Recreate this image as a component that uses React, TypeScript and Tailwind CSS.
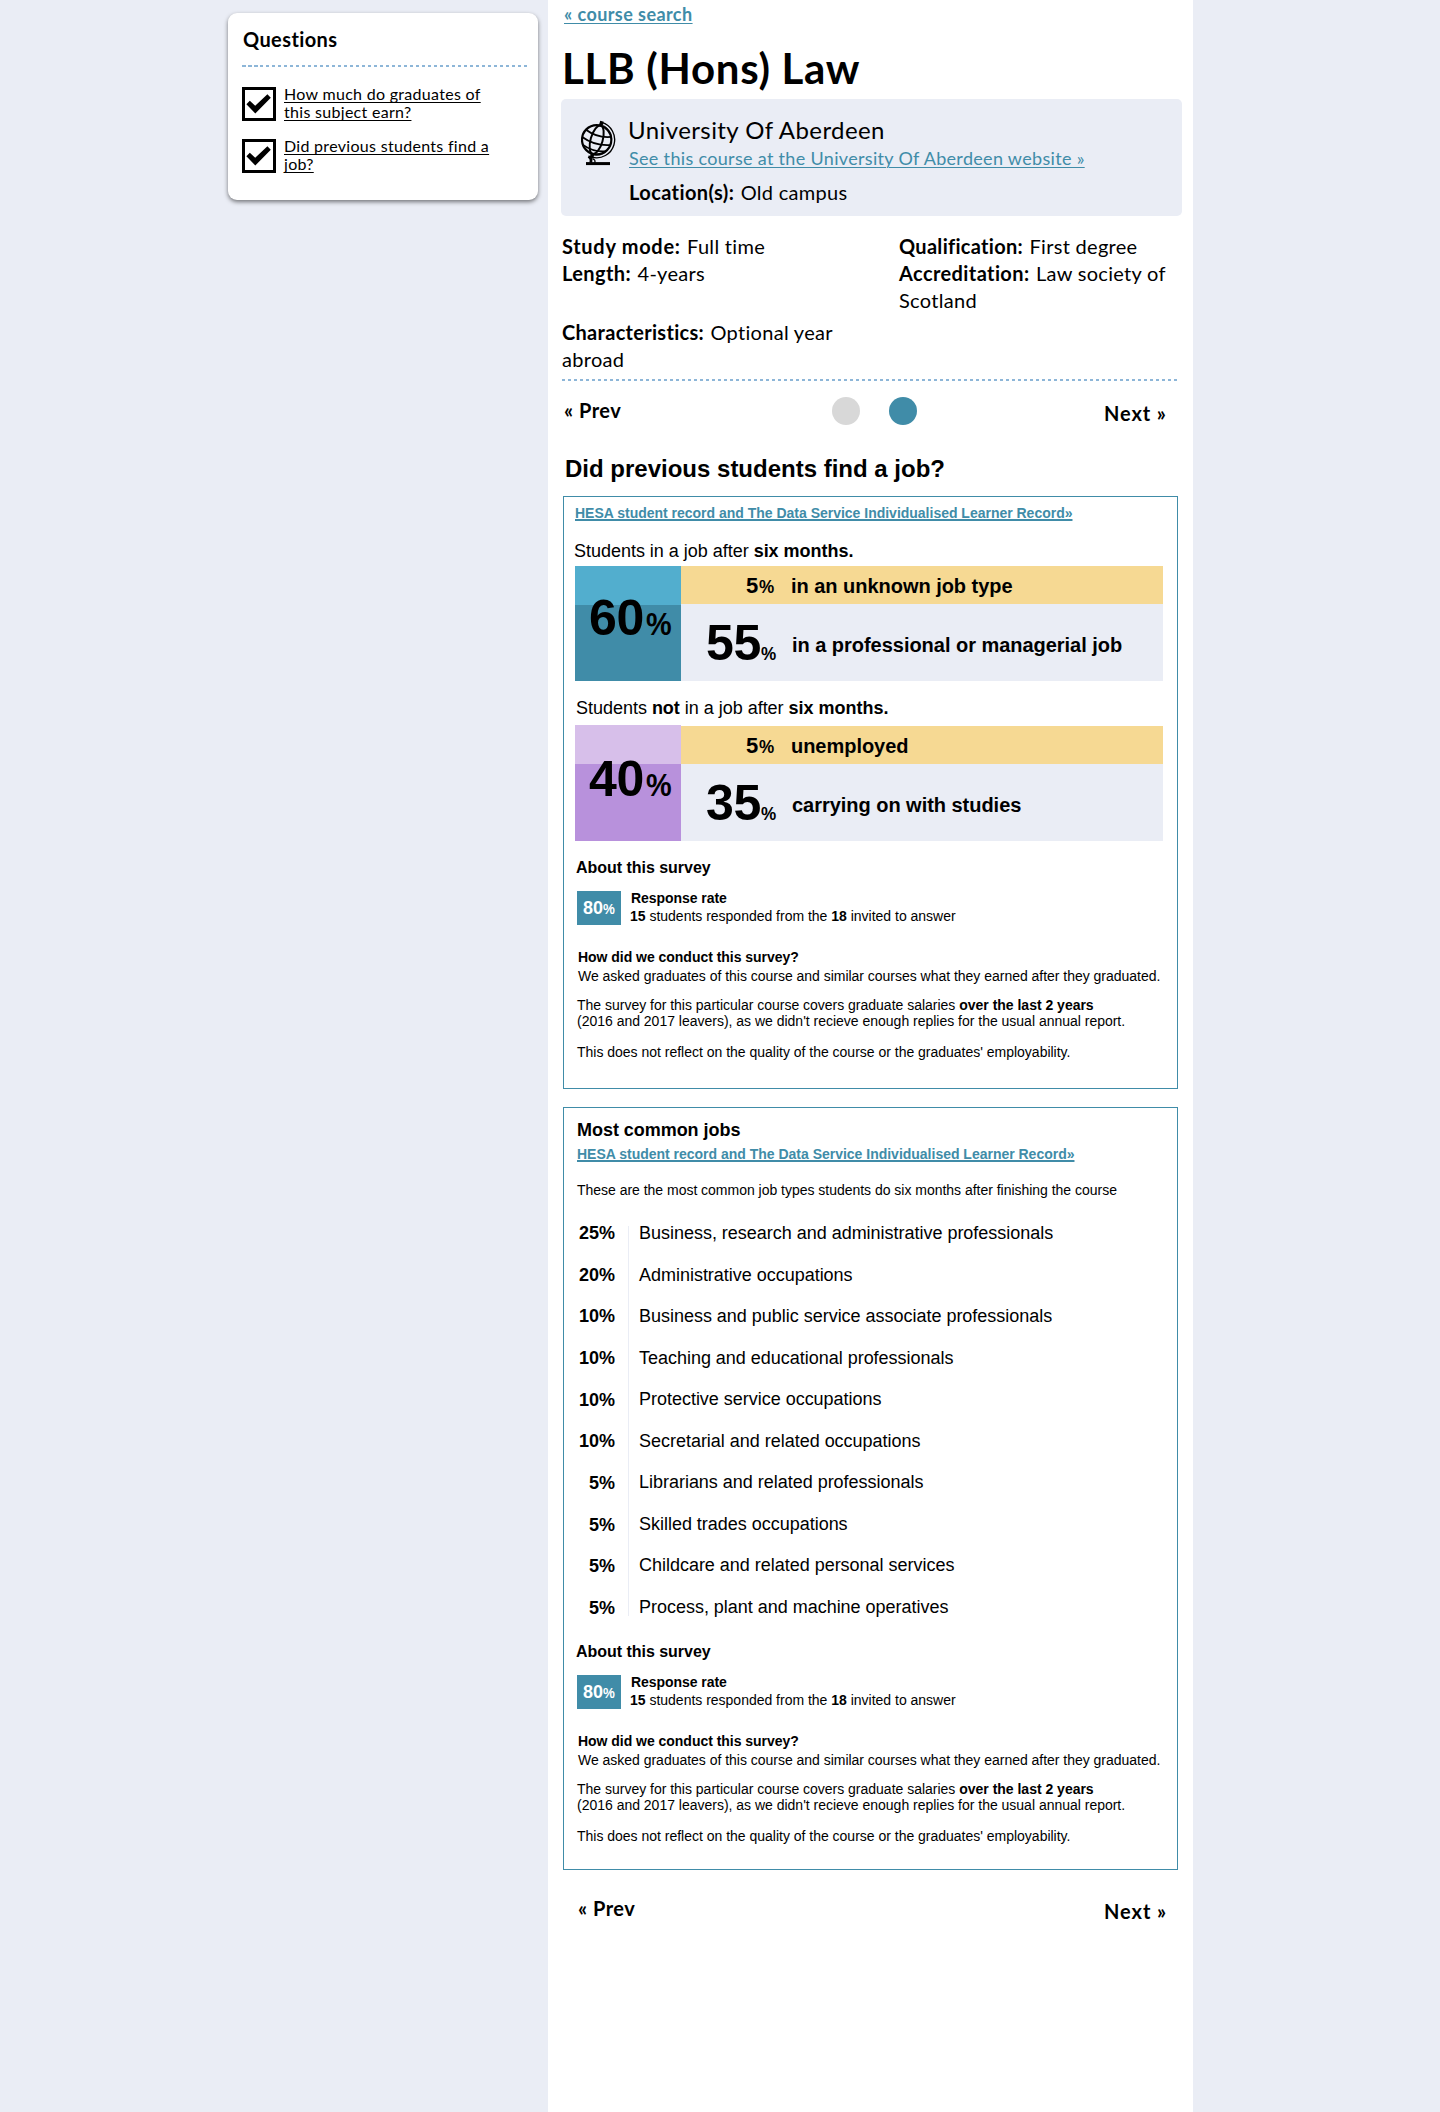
import React from "react";

const LINK = "text-[#408ca8] underline";

function DashedRule({ className }: { className: string }) {
  return (
    <div
      className={`h-[2px] bg-[repeating-linear-gradient(90deg,#8db6d8_0px,#8db6d8_3.5px,transparent_3.5px,transparent_6px)] ${className}`}
    />
  );
}

function Checkbox() {
  return (
    <svg viewBox="0 0 34 34" className="mt-[2px] size-[34px] shrink-0">
      <rect x="1.5" y="1.5" width="31" height="31" fill="#fff" stroke="#000" strokeWidth="3" />
      <path d="M4.4 17.3 7.8 13.7 13.2 18.8 25.4 7.3 28.8 10.8 13.3 26.4Z" fill="#000" />
    </svg>
  );
}

function GlobeIcon() {
  return (
    <svg viewBox="0 0 105 139" className="h-[46.5px] w-[35px]" fill="none" stroke="#000">
      <circle cx="47" cy="62" r="44" strokeWidth="6.5" />
      <g transform="rotate(16 47 62)">
        <ellipse cx="47" cy="62" rx="18" ry="44" strokeWidth="6" />
        <path d="M47 4V17" strokeWidth="11" />
        <path d="M8 42Q47 57 86 42M3 66Q47 82 91 66M12 88Q47 101 82 88" strokeWidth="5.5" />
        <path d="M47 8A54 54 0 0 1 47 116" strokeWidth="4" />
        <path d="M53 14A49 49 0 0 1 53 110" strokeWidth="1.5" />
        <path d="M47 106V119" strokeWidth="11" />
      </g>
      <path d="M22 112Q33 117 29 131" strokeWidth="8" />
      <path d="M34 119Q45 122 41 131" strokeWidth="4" />
      <path d="M15 133.5H87" strokeWidth="9" />
    </svg>
  );
}

function Questions() {
  const items = ["How much do graduates of this subject earn?", "Did previous students find a job?"];
  return (
    <aside className="mt-[13px] ml-[228px] h-[187px] w-[310px] shrink-0 rounded-[9px] bg-white pt-[13px] pl-[14px] shadow-[0_2px_4px_rgba(0,0,0,0.5)]">
      <h3 className="pl-px text-[20px] leading-[27px] font-bold tracking-[0.4px]">Questions</h3>
      <DashedRule className="mt-3 w-[286px]" />
      <div className="mt-[18px] flex flex-col gap-4">
        {items.map((q) => (
          <div key={q} className="flex gap-2">
            <Checkbox />
            <a className="w-[210px] text-[16px] leading-[18px] tracking-[0.3px] underline decoration-1 underline-offset-2 [text-decoration-skip-ink:none]">
              {q}
            </a>
          </div>
        ))}
      </div>
    </aside>
  );
}

function Detail(props: { label: string; value: string; labelClass?: string; className?: string }) {
  return (
    <p className={`text-[20px] leading-[27px] tracking-[0.3px] ${props.className ?? ""}`}>
      <b className={`mr-px ${props.labelClass ?? "tracking-[0.4px]"}`}>{props.label}</b> {props.value}
    </p>
  );
}

function HesaLink({ className }: { className: string }) {
  return (
    <a
      className={`block text-[14px] leading-5 font-bold tracking-[-0.01px] decoration-2 underline-offset-1 [text-decoration-skip-ink:none] ${LINK} ${className}`}
    >
      HESA student record and The Data Service Individualised Learner Record»
    </a>
  );
}

function OutcomeRows(props: { small: string; smallLabel: string; large: string; largeLabel: string }) {
  return (
    <div className="w-[482px] font-bold">
      <div className="flex h-[38px] items-baseline bg-[#f6d993] pt-[7px] pl-[65px]">
        <span className="w-[45px] text-[22px] leading-[25px]">
          {props.small}
          <span className="ml-[1px] inline-block origin-left scale-x-95 text-[18px]">%</span>
        </span>
        <span className="text-[20px] leading-5 tracking-[-0.03px]">{props.smallLabel}</span>
      </div>
      <div className="flex h-[77px] items-start bg-[#eaedf5] pl-[25px]">
        <span className="mt-[14px] w-[86px] text-[50px] leading-[50px] tracking-[-0.3px]">
          {props.large}
          <span className="inline-block origin-left scale-x-90 text-[19px]">%</span>
        </span>
        <span className="mt-[31px] text-[20px] leading-5 tracking-[-0.03px]">{props.largeLabel}</span>
      </div>
    </div>
  );
}

function Survey({ className }: { className: string }) {
  return (
    <section className={`text-[14px] tracking-[-0.01px] ${className}`}>
      <h4 className="pl-3 text-[16px] leading-[21px] font-bold tracking-[-0.03px]">About this survey</h4>
      <div className="mt-[11px] flex pl-[13px]">
        <div className="mt-[2px] h-[34px] w-11 bg-[#408ca8] pl-[6px] text-[18px] leading-[34px] font-bold text-white">
          80<span className="inline-block origin-left scale-x-95 text-[14px]">%</span>
        </div>
        <div className="pl-[9px] leading-[18px]">
          <p className="pl-px font-bold tracking-[-0.05px]">Response rate</p>
          <p>
            <b>15</b> students responded from the <b>18</b> invited to answer
          </p>
        </div>
      </div>
      <h5 className="mt-[23px] pl-[14px] leading-[18px] font-bold tracking-[-0.03px]">How did we conduct this survey?</h5>
      <p className="mt-px pl-[14px] leading-[18px] tracking-[-0.02px] whitespace-nowrap">
        We asked graduates of this course and similar courses what they earned after they graduated.
      </p>
      <p className="mt-3 pl-[13px] leading-4">
        The survey for this particular course covers graduate salaries <b>over the last 2 years</b>
        <br />
        (2016 and 2017 leavers), as we didn't recieve enough replies for the usual annual report.
      </p>
      <p className="mt-[15px] pl-[13px] leading-4">
        This does not reflect on the quality of the course or the graduates' employability.
      </p>
    </section>
  );
}

const JOBS: [string, string][] = [
  ["25%", "Business, research and administrative professionals"],
  ["20%", "Administrative occupations"],
  ["10%", "Business and public service associate professionals"],
  ["10%", "Teaching and educational professionals"],
  ["10%", "Protective service occupations"],
  ["10%", "Secretarial and related occupations"],
  ["5%", "Librarians and related professionals"],
  ["5%", "Skilled trades occupations"],
  ["5%", "Childcare and related personal services"],
  ["5%", "Process, plant and machine operatives"],
];

export default function App() {
  return (
    <div className="flex h-[2112px] w-[1440px] items-start gap-[10px] bg-[#eaedf5] font-['Lato',sans-serif] text-black">
      <Questions />
      <main className="h-[2112px] w-[645px] bg-white pt-[3px]">
        <a className={`block w-fit pl-4 text-[18px] leading-[22px] font-bold tracking-[0.43px] decoration-1 underline-offset-2 ${LINK}`}>
          « course search
        </a>
        <h1 className="mt-[19px] pl-[14px] text-[42px] leading-[49px] font-bold tracking-[0.7px]">LLB (Hons) Law</h1>

        <section className="mt-[6px] ml-[13px] flex h-[117px] w-[621px] rounded-[5px] bg-[#eaedf5] pl-5">
          <div className="w-[48px] pt-[20px]">
            <GlobeIcon />
          </div>
          <div className="pt-4">
            <h2 className="-ml-px text-[24px] leading-[29px] tracking-[0.42px]">University Of Aberdeen</h2>
            <a className={`mt-[3px] block text-[18px] leading-[22px] tracking-[0.32px] decoration-1 underline-offset-2 ${LINK}`}>
              See this course at the University Of Aberdeen website »
            </a>
            <Detail label="Location(s):" value="Old campus" className="mt-[10px]" />
          </div>
        </section>

        <section className="mt-[17px] ml-[14px] grid w-[615px] grid-cols-[337px_278px]">
          <div>
            <Detail label="Study mode:" value="Full time" labelClass="tracking-[0.7px]" />
            <Detail label="Length:" value="4-years" />
          </div>
          <div>
            <Detail label="Qualification:" value="First degree" labelClass="tracking-[0.3px]" />
            <Detail label="Accreditation:" value="Law society of Scotland" />
          </div>
          <Detail
            label="Characteristics:"
            value="Optional year abroad"
            labelClass="tracking-[0.3px]"
            className="mt-[5px] w-[280px]"
          />
        </section>

        <DashedRule className="mt-[6px] ml-[14px] w-[616px]" />

        <nav className="mt-[15px] flex h-[30px] items-start pl-4 text-[20px] leading-[27px] font-bold tracking-[0.5px]">
          <a className="mt-px w-[268px]">« Prev</a>
          <span className="mt-px mr-[29px] size-7 rounded-full bg-[#d8d8d8]" />
          <span className="mt-px mr-[187px] size-7 rounded-full bg-[#408ca8]" />
          <a className="mt-1 tracking-[0.9px]">Next »</a>
        </nav>

        <div className="ml-[15px] w-[615px] font-['Liberation_Sans',sans-serif]">
          <h2 className="mt-[28px] pl-[2px] text-[24px] leading-[29px] font-bold">Did previous students find a job?</h2>

          <section className="mt-[13px] h-[593px] border border-[#408ca8] pt-[6px]">
            <HesaLink className="ml-[11px] w-fit" />
            <p className="mt-[17px] pl-[10px] text-[18px] leading-[22px] tracking-[-0.02px]">
              Students in a job after <b>six months.</b>
            </p>
            <div className="mt-1 ml-[11px] flex">
              <div className="h-[115px] w-[106px] bg-[linear-gradient(#52aece_39px,#408ca8_39px)] pt-[27px] pl-[14px] text-[50px] leading-[50px] font-bold tracking-[-0.3px]">
                60<span className="ml-[1.5px] inline-block origin-left scale-x-90 text-[32px]">%</span>
              </div>
              <OutcomeRows small="5" smallLabel="in an unknown job type" large="55" largeLabel="in a professional or managerial job" />
            </div>
            <p className="mt-4 pl-3 text-[18px] leading-[22px] tracking-[-0.02px]">
              Students <b>not</b> in a job after <b>six months.</b>
            </p>
            <div className="mt-[6px] ml-[11px] flex items-end">
              <div className="h-[116px] w-[106px] bg-[linear-gradient(#d7bfea_39px,#b891dc_39px)] pt-[29px] pl-[14px] text-[50px] leading-[50px] font-bold tracking-[-0.3px]">
                40<span className="ml-[1.5px] inline-block origin-left scale-x-90 text-[32px]">%</span>
              </div>
              <OutcomeRows small="5" smallLabel="unemployed" large="35" largeLabel="carrying on with studies" />
            </div>
            <Survey className="mt-4" />
          </section>

          <section className="mt-[18px] h-[763px] border border-[#408ca8] pt-[11px]">
            <h3 className="pl-[13px] text-[18px] leading-[22px] font-bold tracking-[-0.04px]">Most common jobs</h3>
            <HesaLink className="mt-[3px] ml-[13px] w-fit" />
            <p className="mt-4 pl-[13px] text-[14px] leading-5 tracking-[-0.02px]">
              These are the most common job types students do six months after finishing the course
            </p>
            <div className="mt-[22px] flex h-[416px] text-[18px] leading-[22px]">
              <div className="w-[51px] text-right font-bold">
                {JOBS.map(([pct], i) => (
                  <p key={i} className="h-[41.67px]">
                    {pct}
                  </p>
                ))}
              </div>
              <div className="mt-1 ml-[13px] h-[390px] w-px bg-[#eaedf5]" />
              <div className="ml-[10px] tracking-[-0.02px]">
                {JOBS.map(([, job]) => (
                  <p key={job} className="h-[41.55px]">
                    {job}
                  </p>
                ))}
              </div>
            </div>
            <Survey className="mt-[3px]" />
          </section>
        </div>

        <nav className="mt-[25px] flex items-start justify-between pr-[26px] pl-[30px] text-[20px] leading-[27px] font-bold tracking-[0.5px]">
          <a>« Prev</a>
          <a className="mt-[3px] tracking-[0.9px]">Next »</a>
        </nav>
      </main>
    </div>
  );
}
